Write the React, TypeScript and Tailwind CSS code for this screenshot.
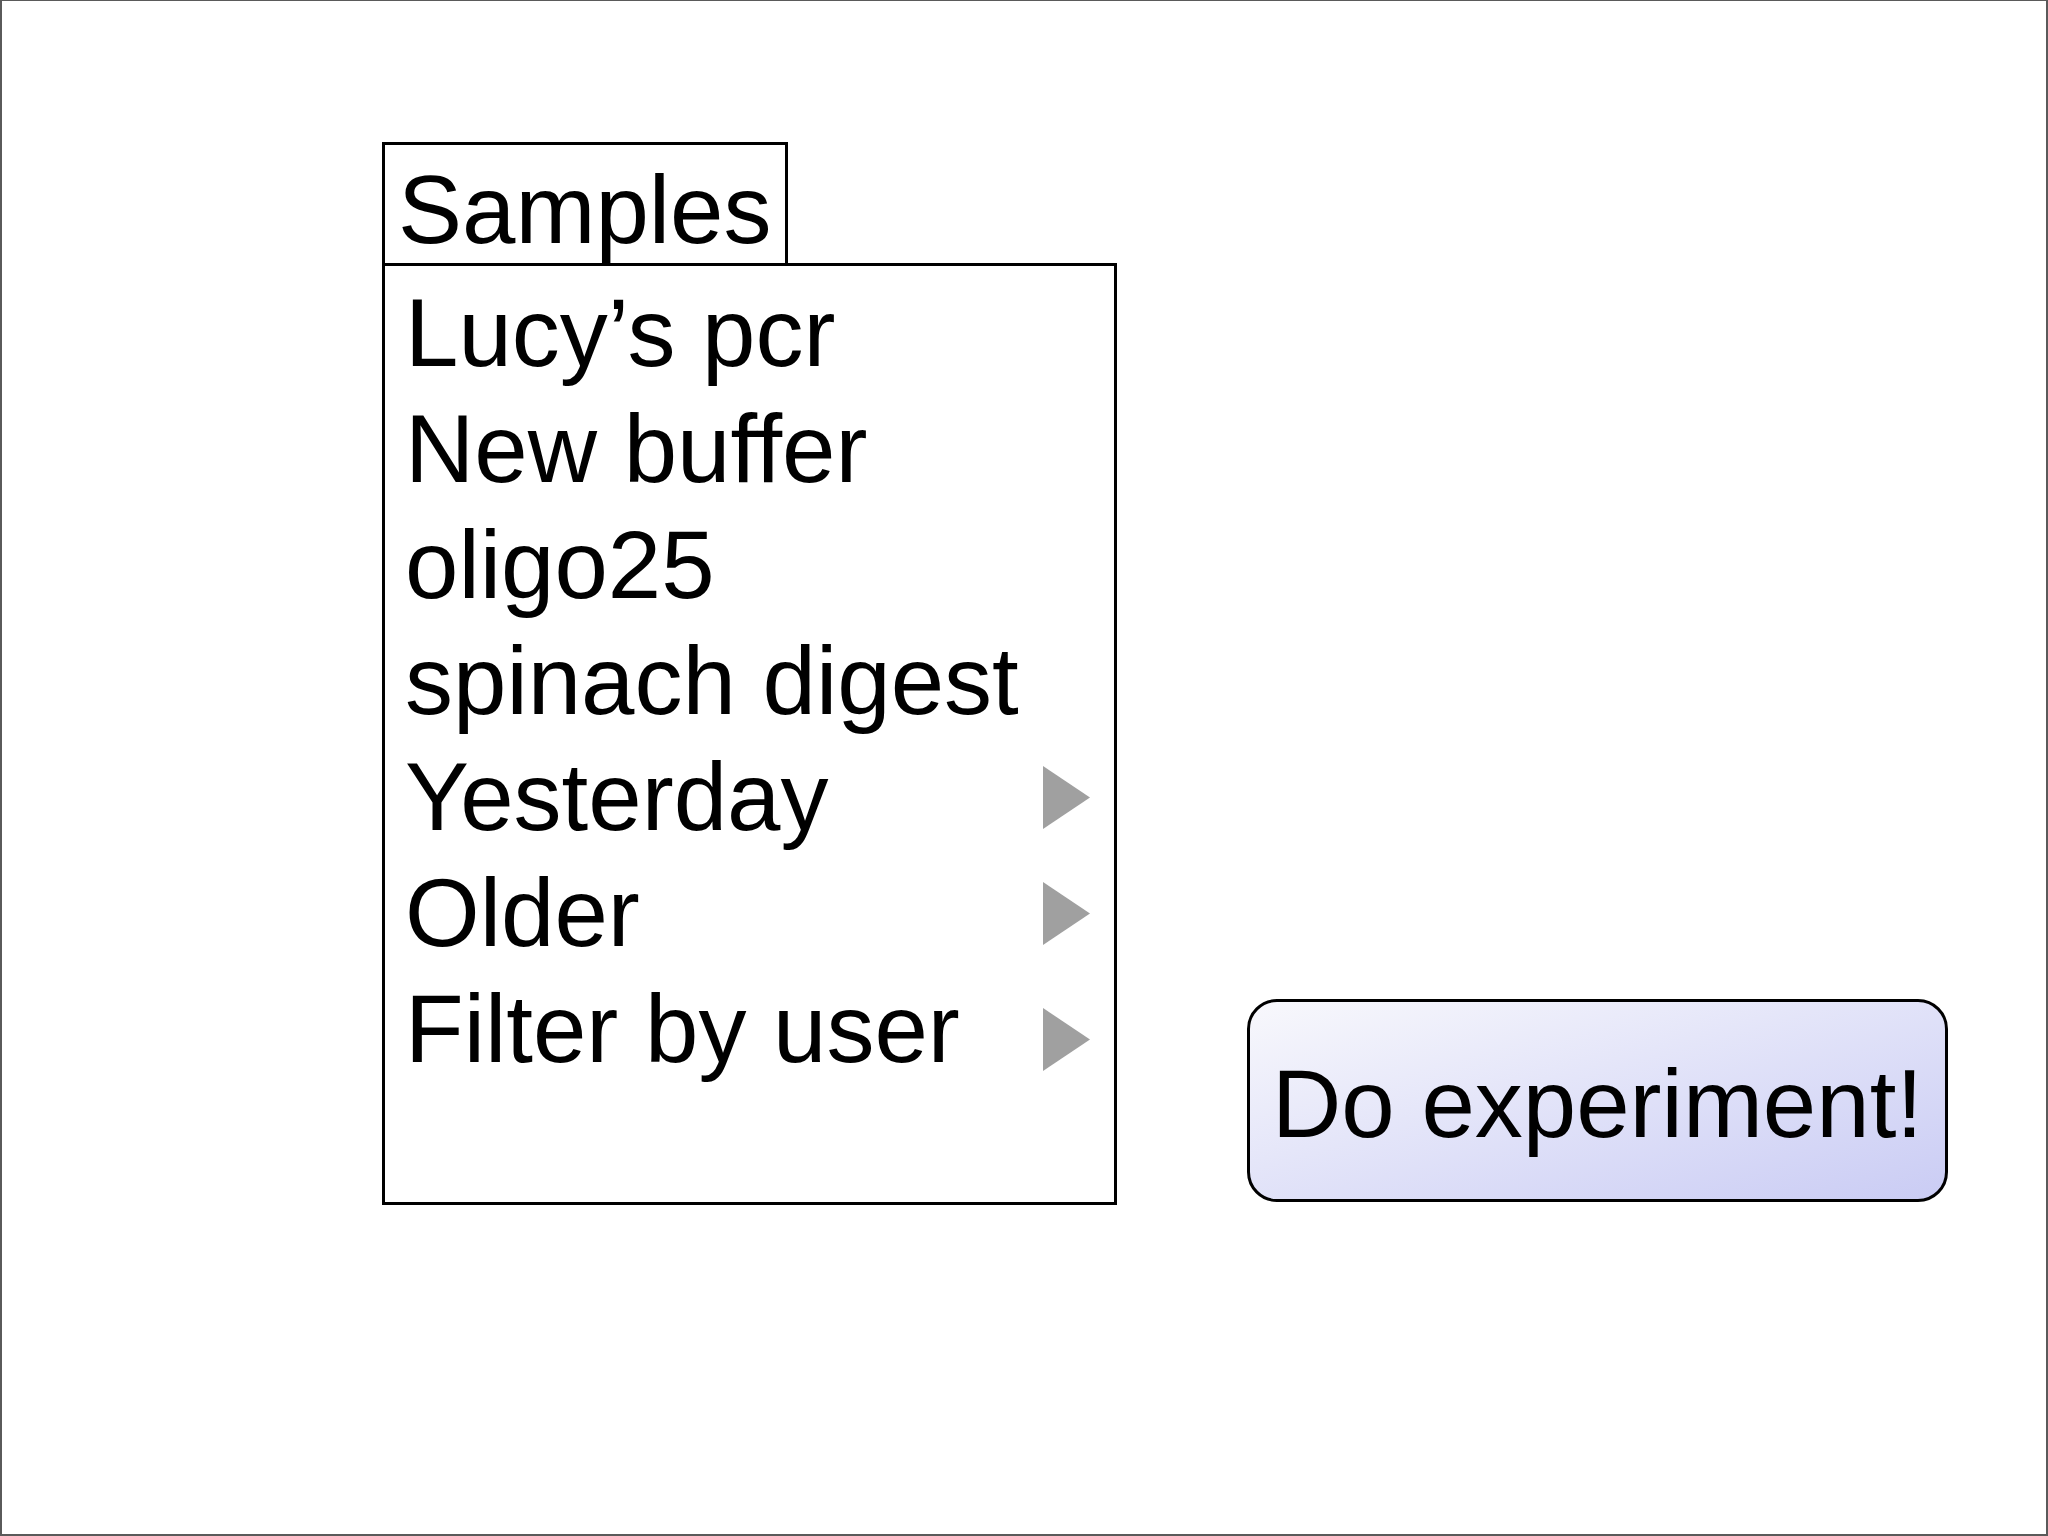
const items: { label: string; sub?: boolean; nudge?: boolean }[] = [
  { label: 'Lucy’s pcr' },
  { label: 'New buffer' },
  { label: 'oligo25' },
  { label: 'spinach digest' },
  { label: 'Yesterday', sub: true },
  { label: 'Older', sub: true },
  { label: 'Filter by user', sub: true, nudge: true },
]

function Arrow({ nudge }: { nudge?: boolean }) {
  return (
    <svg
      width="47"
      height="63"
      viewBox="0 0 47 63"
      className={nudge ? 'mt-[20px] shrink-0' : 'shrink-0'}
    >
      <polygon points="0,0 47,31.5 0,63" fill="#a0a0a0" />
    </svg>
  )
}

function SamplesMenu() {
  return (
    <div className="flex flex-col items-start">
      {/* tab */}
      <div className="border-[3px] border-b-0 border-black px-[13px] pt-[11px] leading-[107px]">
        Samples
      </div>
      {/* list */}
      <div className="w-[735px] h-[942px] border-[3px] border-black pt-[9px] pl-[20px] pr-[24px]">
        {items.map(item => (
          <div key={item.label} className="flex items-center justify-between h-[116px] leading-[116px]">
            <span>{item.label}</span>
            {item.sub && <Arrow nudge={item.nudge} />}
          </div>
        ))}
      </div>
    </div>
  )
}

export default function App() {
  return (
    <div
      className="w-[2048px] h-[1536px] bg-white border-t border-l-2 border-r-2 border-b-2 border-[#5a5a5a] text-black text-[96px] flex items-start pl-[380px] pt-[141px] gap-[130px]"
      style={{ fontFamily: '"Liberation Sans", Arial, sans-serif' }}
    >
      <SamplesMenu />
      <button className="mt-[857px] w-[701px] h-[203px] border-[3px] border-black rounded-[30px] bg-linear-to-br from-[#f8f8fc] to-[#caccf4] flex items-center justify-center pt-[6px] leading-[107px] text-black">
        Do experiment!
      </button>
    </div>
  )
}
